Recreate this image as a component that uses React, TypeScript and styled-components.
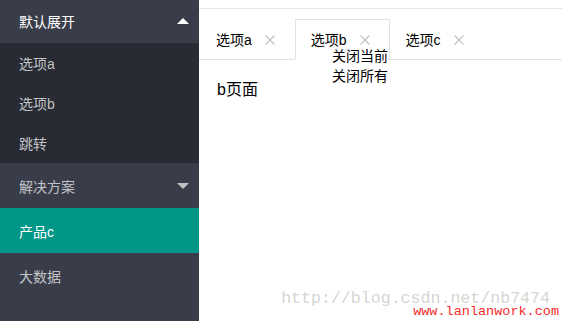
import React from "react";
import styled, { createGlobalStyle } from "styled-components";

const Global = createGlobalStyle`
  html, body { margin: 0; padding: 0; background: #fff; }
  body { font-family: "Liberation Sans", "Noto Sans CJK SC", sans-serif; font-size: 14px; color: #333; }
  * { box-sizing: border-box; }
  ul { list-style: none; margin: 0; padding: 0; }
`;

const Page = styled.div`
  display: flex;
  width: 562px;
  height: 321px;
  overflow: hidden;
  position: relative;
`;

const Sidebar = styled.nav`
  width: 199px;
  flex: none;
  background: #393d49;
  overflow: hidden;
`;

const NavList = styled.ul`
  margin-top: -2px;
`;

const NavRow = styled.div<{ $active?: boolean; $bright?: boolean }>`
  height: 45px;
  display: flex;
  align-items: center;
  justify-content: space-between;
  padding: 0 10px 0 19px;
  background: ${(p) => (p.$active ? "#009688" : "transparent")};
  color: ${(p) => (p.$bright || p.$active ? "#fff" : "rgba(255,255,255,0.7)")};
`;

const SubList = styled.ul`
  background: #282b33;
`;

const SubRow = styled.li`
  height: 40px;
  display: flex;
  align-items: center;
  padding-left: 19px;
  color: rgba(255, 255, 255, 0.72);
`;

const Arrow = styled.span<{ $up?: boolean }>`
  width: 0;
  height: 0;
  border-left: 6px solid transparent;
  border-right: 6px solid transparent;
  ${(p) => (p.$up ? "border-bottom: 6px solid #fff;" : "border-top: 6px solid #c2c2c2;")}
`;

const Main = styled.main`
  flex: 1;
  position: relative;
  margin-top: 8px;
  border-top: 1px solid #e6e6e6;
`;

const TabTitle = styled.ul`
  margin-top: 10px;
  height: 41px;
  border-bottom: 1px solid #e2e2e2;
  display: flex;
  padding-left: 1px;
`;

const Tab = styled.li<{ $active?: boolean }>`
  height: 41px;
  display: flex;
  align-items: center;
  padding: 0 15px 0 15px;
  border: 1px solid ${(p) => (p.$active ? "#e2e2e2" : "transparent")};
  border-bottom-color: ${(p) => (p.$active ? "#fff" : "transparent")};
  background: ${(p) => (p.$active ? "#fff" : "transparent")};
  color: #000;
  line-height: 20px;
  position: relative;
  z-index: 1;
  margin-bottom: -1px;
`;

const Close = styled.span`
  width: 18px;
  height: 18px;
  margin-left: 9px;
  display: inline-flex;
  align-items: center;
  justify-content: center;
`;

const Content = styled.div`
  padding: 20px 0 0 18px;
  font-size: 16px;
  line-height: 20px;
  color: #000;
`;

const ContextMenu = styled.ul`
  position: absolute;
  left: 133px;
  top: 38px;
  z-index: 2;
  line-height: 19.5px;
  color: #000;
`;

const Watermark = styled.div`
  position: absolute;
  right: 0;
  bottom: 0;
  display: flex;
  flex-direction: column;
  align-items: flex-end;
  font-family: "Liberation Mono", monospace;
  pointer-events: none;
`;

const MarkGray = styled.div`
  font-size: 16.6px;
  line-height: 14px;
  color: #d6d6d2;
  margin-right: 12px;
`;

const MarkRed = styled.div`
  font-size: 13.5px;
  line-height: 12px;
  color: #f32b2b;
  margin-right: 3px;
  margin-bottom: 3px;
`;

const CloseIcon = () => (
  <svg width="10" height="10" viewBox="0 0 10 10">
    <path d="M0.5 0.5 L9.5 9.5 M9.5 0.5 L0.5 9.5" stroke="#c2c2c2" strokeWidth="1.2" fill="none" />
  </svg>
);

const tabs = ["选项a", "选项b", "选项c"];

export default function App() {
  return (
    <>
      <Global />
      <Page>
        <Sidebar>
          <NavList>
            <li>
              <NavRow $bright>
                <span>默认展开</span>
                <Arrow $up />
              </NavRow>
              <SubList>
                <SubRow>选项a</SubRow>
                <SubRow>选项b</SubRow>
                <SubRow>跳转</SubRow>
              </SubList>
            </li>
            <li>
              <NavRow>
                <span>解决方案</span>
                <Arrow />
              </NavRow>
            </li>
            <li>
              <NavRow $active>
                <span>产品c</span>
              </NavRow>
            </li>
            <li>
              <NavRow>
                <span>大数据</span>
              </NavRow>
            </li>
          </NavList>
        </Sidebar>
        <Main>
          <TabTitle>
            {tabs.map((t) => (
              <Tab key={t} $active={t === "选项b"}>
                {t}
                <Close>
                  <CloseIcon />
                </Close>
              </Tab>
            ))}
          </TabTitle>
          <Content>b页面</Content>
          <ContextMenu>
            <li>关闭当前</li>
            <li>关闭所有</li>
          </ContextMenu>
        </Main>
        <Watermark>
          <MarkGray>http://blog.csdn.net/nb7474</MarkGray>
          <MarkRed>www.lanlanwork.com</MarkRed>
        </Watermark>
      </Page>
    </>
  );
}
